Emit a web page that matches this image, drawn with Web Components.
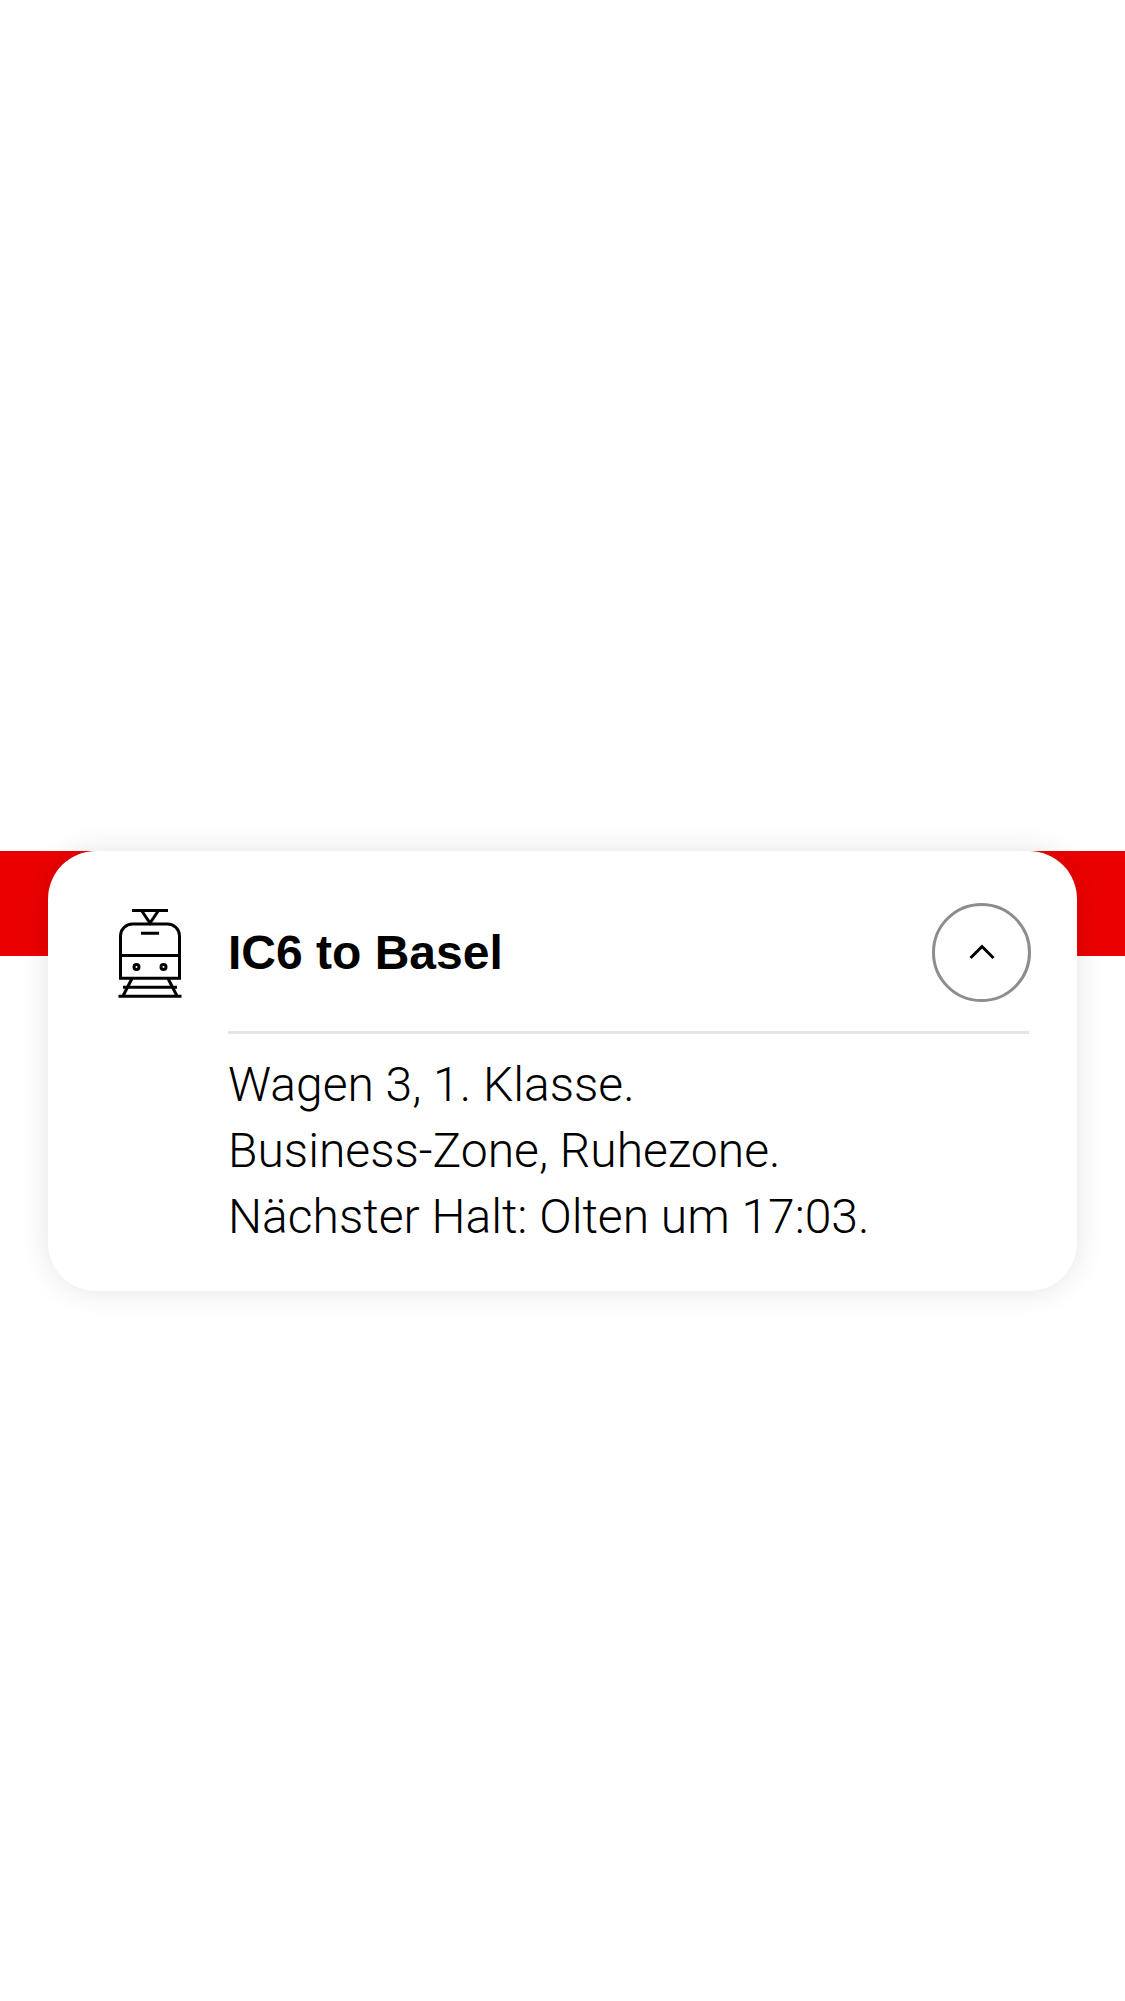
<!DOCTYPE html>
<html lang="de">
<head>
<meta charset="utf-8">
<meta name="viewport" content="width=device-width, initial-scale=1">
<title>IC6 to Basel</title>
<style>
  body { margin: 0; background: #fff; color: #000; font-family: "Liberation Sans", Arial, sans-serif; }
</style>
</head>
<body>
<header-stage>
  <journey-card>
    <train-icon slot="icon"></train-icon>
    <span slot="title">IC6 to Basel</span>
    <info-line>Wagen 3, 1. Klasse.</info-line>
    <info-line>Business-Zone, Ruhezone.</info-line>
    <info-line>Nächster Halt: Olten um 17:03.</info-line>
  </journey-card>
</header-stage>

<script>
class HeaderStage extends HTMLElement {
  constructor() {
    super();
    this.attachShadow({ mode: "open" }).innerHTML = `
      <style>
        :host { display: grid; grid-template-columns: minmax(0, 1fr); align-items: start; padding: 851px 0 48px; }
        .band { grid-area: 1 / 1; height: 105px; background: #eb0000; }
        .content { grid-area: 1 / 1; padding: 0 48px; }
      </style>
      <div class="band"></div>
      <main class="content"><slot></slot></main>`;
  }
}

class TrainIcon extends HTMLElement {
  constructor() {
    super();
    this.attachShadow({ mode: "open" }).innerHTML = `
      <style>
        :host { display: block; }
        svg { display: block; width: 108px; height: 108px; }
      </style>
      <svg viewBox="-4 8.5 108 108" fill="none" stroke="currentColor" stroke-width="3" aria-hidden="true">
        <path d="M32 20H68M41.5 20L50 32.5L58.5 20"/>
        <path d="M20.5 87.7V45.5A12 12 0 0 1 32.5 33.5H67.5A12 12 0 0 1 79.5 45.5V87.7Z"/>
        <path d="M20.5 65H79.5M41 42.7H59"/>
        <circle cx="36.5" cy="76.5" r="2.5"/>
        <circle cx="63.5" cy="76.5" r="2.5"/>
        <path d="M32 88L23 105.5M68 88L77 105.5M23 96.7H77M18.5 105.7H81.5"/>
      </svg>`;
  }
}

class ToggleButton extends HTMLElement {
  constructor() {
    super();
    this.attachShadow({ mode: "open" }).innerHTML = `
      <style>
        :host { display: block; }
        button { display: grid; place-items: center; width: 99px; height: 99px; padding: 0;
          border: 3px solid #8d8d8d; border-radius: 50%; background: #fff; color: #000; cursor: pointer; }
        svg { display: block; width: 72px; height: 72px; }
        button[aria-expanded="false"] svg { transform: rotate(180deg); }
      </style>
      <button type="button" aria-label="Details" aria-expanded="true">
        <svg viewBox="0 0 72 72" fill="none" stroke="currentColor" stroke-width="3" aria-hidden="true">
          <path d="M24.5 41L36 29.5L47.5 41"/>
        </svg>
      </button>`;
    const button = this.shadowRoot.querySelector("button");
    button.addEventListener("click", () => {
      const open = button.getAttribute("aria-expanded") !== "true";
      button.setAttribute("aria-expanded", String(open));
      this.dispatchEvent(new CustomEvent("toggle-details", { detail: open }));
    });
  }
}

class InfoLine extends HTMLElement {
  constructor() {
    super();
    this.attachShadow({ mode: "open" }).innerHTML = `
      <style>:host { display: block; }</style><slot></slot>`;
  }
}

class JourneyCard extends HTMLElement {
  constructor() {
    super();
    this.attachShadow({ mode: "open" }).innerHTML = `
      <style>
        :host { display: block; background: #fff; border-radius: 48px; box-shadow: 0 0 30px rgba(0, 0, 0, .11); }
        article { padding: 52px 46px 41px 48px; }
        header { display: flex; align-items: center; gap: 24px; height: 99px; }
        h1 { flex: 1; margin: 0; font-size: 48px; line-height: 66px; font-weight: 700; }
        .details { margin: 29px 2px 0 132px; padding-top: 18px; border-top: 3px solid #e5e5e5;
          font-family: Roboto, "Liberation Sans", sans-serif; font-size: 48px; line-height: 66px; font-weight: 300; }
        .details[hidden] { display: none; }
      </style>
      <article>
        <header>
          <slot name="icon"></slot>
          <h1><slot name="title"></slot></h1>
          <toggle-button></toggle-button>
        </header>
        <div class="details"><slot></slot></div>
      </article>`;
    const details = this.shadowRoot.querySelector(".details");
    this.shadowRoot.querySelector("toggle-button")
      .addEventListener("toggle-details", (e) => { details.hidden = !e.detail; });
  }
}

customElements.define("header-stage", HeaderStage);
customElements.define("train-icon", TrainIcon);
customElements.define("toggle-button", ToggleButton);
customElements.define("info-line", InfoLine);
customElements.define("journey-card", JourneyCard);
</script>
</body>
</html>
